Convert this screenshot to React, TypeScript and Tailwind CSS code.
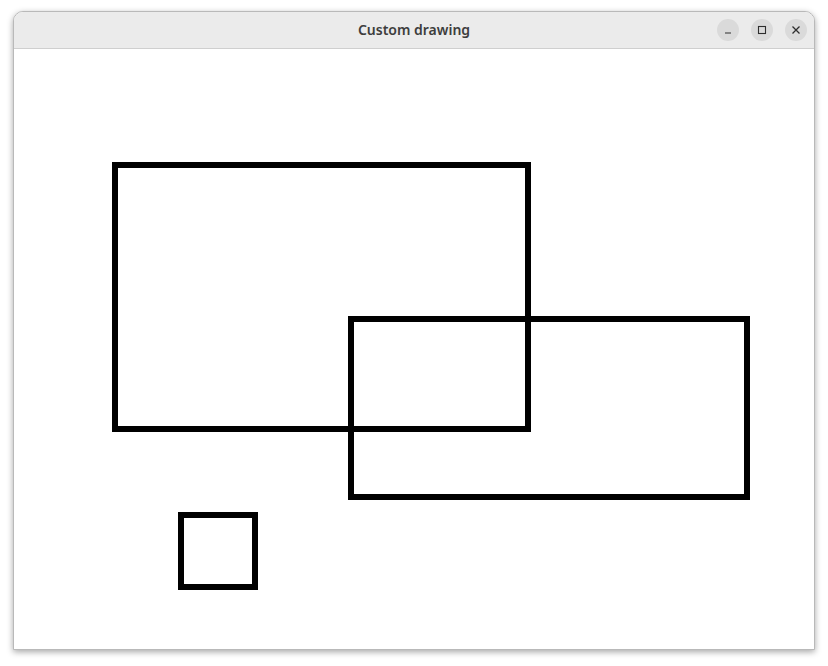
import React from 'react';

const shapes = [
  { x: 101, y: 116, w: 413, h: 264 },
  { x: 337, y: 270, w: 396, h: 178 },
  { x: 167, y: 466, w: 74, h: 72 },
];

const TitleButton: React.FC<{ children: React.ReactNode }> = ({ children }) => (
  <div className="w-[22px] h-[22px] rounded-full bg-[#dadada] flex items-center justify-center text-[#2e2e2e]">
    {children}
  </div>
);

const App: React.FC = () => {
  return (
    <div className="w-[828px] h-[666px] bg-white pt-[11px] pl-[13px]">
      <div className="w-[802px] h-[639px] flex flex-col rounded-t-[10px] border border-[#b9b9b9] shadow-[0_2px_6px_rgba(0,0,0,0.35)] overflow-hidden bg-white">
        <div className="h-[37px] shrink-0 bg-[#ebebeb] border-b border-[#cfcfcf] flex items-center relative">
          <div className="flex-1 text-center text-[14px] leading-[18px] pb-[1px] font-semibold text-[#3d3d3d] font-['Noto_Sans',sans-serif]">
            Custom drawing
          </div>
          <div className="absolute right-[7px] top-[7px] flex gap-[12px]">
            <TitleButton>
              <svg width="10" height="10" viewBox="0 0 10 10">
                <path d="M2 8h6" stroke="currentColor" strokeWidth="1.2" />
              </svg>
            </TitleButton>
            <TitleButton>
              <svg width="10" height="10" viewBox="0 0 10 10">
                <rect x="1.5" y="1.5" width="7" height="7" fill="none" stroke="currentColor" strokeWidth="1.1" />
              </svg>
            </TitleButton>
            <TitleButton>
              <svg width="10" height="10" viewBox="0 0 10 10">
                <path d="M1.5 1.5l7 7M8.5 1.5l-7 7" stroke="currentColor" strokeWidth="1.3" />
              </svg>
            </TitleButton>
          </div>
        </div>
        <div className="flex-1 bg-white">
          <svg width="800" height="600" viewBox="0 0 800 600" className="block">
            {shapes.map((s, i) => (
              <rect key={i} x={s.x} y={s.y} width={s.w} height={s.h} fill="none" stroke="#000" strokeWidth="6" />
            ))}
          </svg>
        </div>
      </div>
    </div>
  );
};

export default App;
